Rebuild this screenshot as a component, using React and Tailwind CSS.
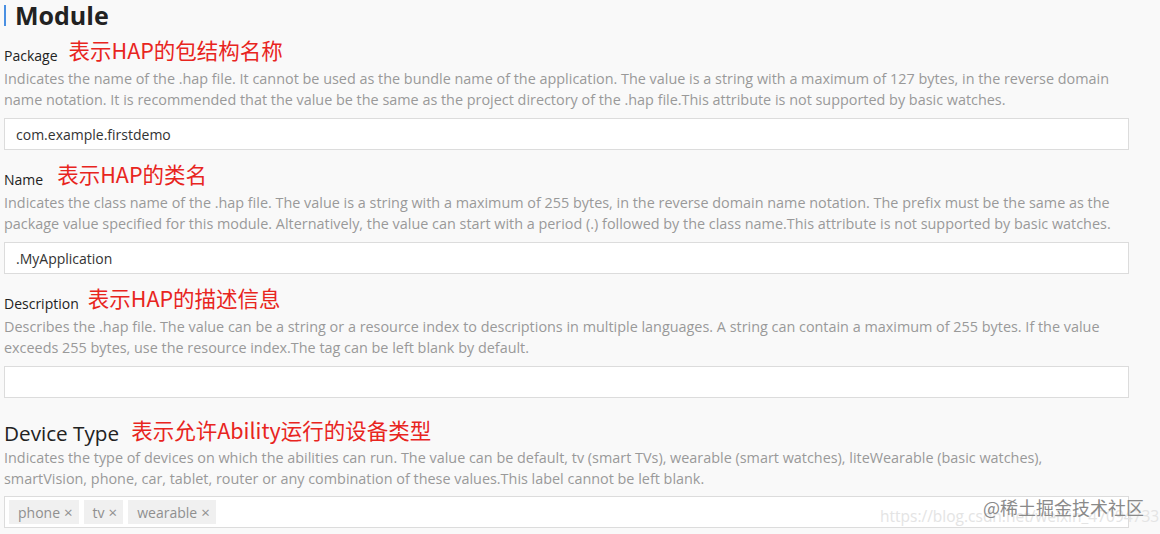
import React from 'react';

const sections = [
  {
    label: 'Package',
    note: '表示HAP的包结构名称',
    gap: 'ml-[11px]',
    lines: [
      'Indicates the name of the .hap file. It cannot be used as the bundle name of the application. The value is a string with a maximum of 127 bytes, in the reverse domain',
      'name notation. It is recommended that the value be the same as the project directory of the .hap file.This attribute is not supported by basic watches.',
    ],
    value: 'com.example.firstdemo',
  },
  {
    label: 'Name',
    note: '表示HAP的类名',
    gap: 'ml-[14px]',
    lines: [
      'Indicates the class name of the .hap file. The value is a string with a maximum of 255 bytes, in the reverse domain name notation. The prefix must be the same as the',
      'package value specified for this module. Alternatively, the value can start with a period (.) followed by the class name.This attribute is not supported by basic watches.',
    ],
    value: '.MyApplication',
  },
  {
    label: 'Description',
    note: '表示HAP的描述信息',
    gap: 'ml-[9px]',
    lines: [
      'Describes the .hap file. The value can be a string or a resource index to descriptions in multiple languages. A string can contain a maximum of 255 bytes. If the value',
      'exceeds 255 bytes, use the resource index.The tag can be left blank by default.',
    ],
    value: '',
  },
];

export default function App() {
  return (
    <div className="w-[1160px] h-[534px] overflow-hidden bg-[#f9f9f9] relative font-['Open_Sans','Noto_Sans_CJK_SC',sans-serif]">
      <div className="pl-[4px] pr-[31px] pt-[1px]">
        {/* heading */}
        <div className="flex items-center h-[28px]">
          <div className="w-[2px] h-[21px] bg-[#4a90e2]" />
          <h1 className="ml-[9px] text-[25px] leading-[28px] font-bold text-[#222]">Module</h1>
        </div>

        {sections.map((s, i) => (
          <div key={i} className={i === 0 ? 'mt-[8px]' : 'mt-[11px]'}>
            <div className="flex items-end h-[29px]">
              <span className="text-[14px] leading-[20px] text-[#222]">{s.label}</span>
              <span className={`${s.gap} pb-[3px] text-[21.5px] leading-[26px] text-[#e8251e] font-['Noto_Sans_CJK_SC',sans-serif]`}>{s.note}</span>
            </div>
            <div className="mt-[2px] text-[14.4px] leading-[21px] text-[#999]">
              {s.lines.map((l, j) => (
                <div key={j} className="whitespace-nowrap">{l}</div>
              ))}
            </div>
            <div className="mt-[8px] h-[32px] bg-white border border-[#dcdcdc] flex items-center px-[11px] text-[14px] text-[#333]">
              {s.value}
            </div>
          </div>
        ))}

        <div className="mt-[19px]">
          <div className="flex items-end h-[29px]">
            <span className="text-[20.7px] leading-[26px] text-[#222]">Device Type</span>
            <span className="ml-[12px] pb-[3px] text-[21.5px] leading-[26px] text-[#e8251e] font-['Noto_Sans_CJK_SC',sans-serif]">表示允许Ability运行的设备类型</span>
          </div>
          <div className="mt-[1px] text-[14.4px] leading-[21px] text-[#999]">
            <div className="whitespace-nowrap">Indicates the type of devices on which the abilities can run. The value can be default, tv (smart TVs), wearable (smart watches), liteWearable (basic watches),</div>
            <div className="whitespace-nowrap">smartVision, phone, car, tablet, router or any combination of these values.This label cannot be left blank.</div>
          </div>
          <div className="mt-[7px] h-[32px] bg-white border border-[#dcdcdc] flex items-center gap-[5px] px-[4px]">
            {['phone', 'tv', 'wearable'].map((t) => (
              <span key={t} className="h-[24px] flex items-center pl-[9px] pr-[6px] bg-[#f0f0f0] text-[14px] text-[#8f8f8f]">
                {t}
                <span className="ml-[4px] text-[15px] leading-none">×</span>
              </span>
            ))}
          </div>
        </div>
      </div>

      {/* watermark */}
      <div className="absolute left-[880px] top-[505px] text-[15.5px] text-[#e4e4e4] whitespace-nowrap">https://blog.csdn.net/weixin_47094733</div>
      <div className="absolute left-[983px] top-[494px] text-[18px] text-[#8a8a8a] whitespace-nowrap font-['Noto_Sans_CJK_SC',sans-serif]">@稀土掘金技术社区</div>
    </div>
  );
}
